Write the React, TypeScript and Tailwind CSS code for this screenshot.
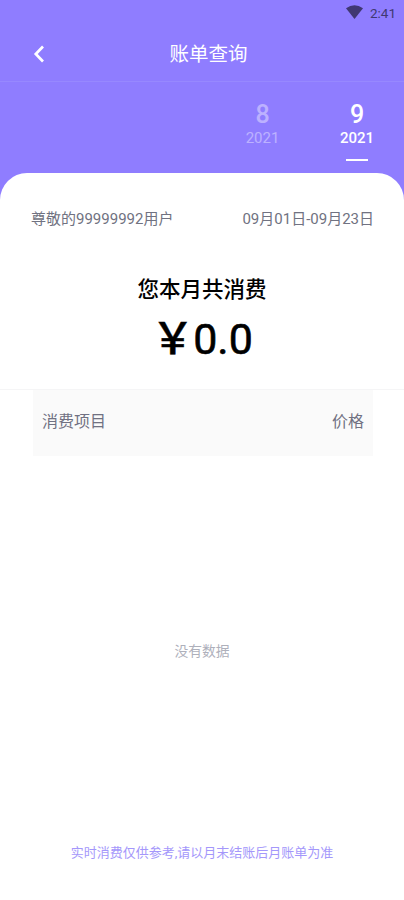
export default function App() {
  return (
    <div className="flex h-[900px] w-[404px] flex-col overflow-hidden bg-[#8f7dff] font-['Roboto','Noto_Sans_CJK_SC',sans-serif]">
      <header className="h-[82px] shrink-0 border-b border-[#9788ff]">
        <div className="flex h-[26px] items-center justify-end gap-[7px] pr-[8px] text-[13.5px] text-[#403872]">
          <svg className="mb-[2px] h-[14px] w-[17px]" viewBox="0 0 17 14" fill="currentColor"><path d="M0 3.3Q8.5-2.6 17 3.3L8.5 14Z" /></svg>
          <span>2:41</span>
        </div>
        <div className="grid h-[56px] grid-cols-[45px_1fr_32px] items-center text-white">
          <svg className="ml-[33px] h-[18px] w-[12px]" viewBox="0 0 12 18" fill="none" stroke="currentColor" strokeWidth="2.7"><path d="M10 1.5L2.8 9L10 16.5" /></svg>
          <h1 className="pt-px text-center text-[19.5px]">账单查询</h1>
        </div>
      </header>
      <nav className="flex h-[91px] shrink-0 justify-end text-center text-white">
        <div className="w-[95px] pt-[19px] opacity-40">
          <div className="text-[25px] leading-[27px] font-medium">8</div>
          <div className="text-[15px] leading-[20px] font-normal">2021</div>
        </div>
        <div className="flex w-[94px] flex-col items-center pt-[19px]">
          <div className="text-[25px] leading-[27px] font-medium">9</div>
          <div className="text-[15px] leading-[20px] font-medium">2021</div>
          <div className="mt-[11px] h-[2px] w-[22px] bg-white" />
        </div>
      </nav>
      <main className="flex flex-1 flex-col rounded-t-[27px] bg-white">
        <section className="h-[217px] shrink-0 border-b border-[#f5f5f6]">
          <div className="flex justify-between px-[31px] pt-[35px] text-[15px] leading-[22px] text-[#707281]">
            <span>尊敬的99999992用户</span>
            <span className="-mr-px">09月01日-09月23日</span>
          </div>
          <h2 className="pt-[44px] text-center text-[21.5px] leading-[32px] font-medium">您本月共消费</h2>
          <div className="flex justify-center text-[43px] leading-[66px]">
            <span className="font-medium [-webkit-text-stroke:0.5px_black]">￥</span><span className="-ml-[1px] [-webkit-text-stroke:0.6px_black]">0.0</span>
          </div>
        </section>
        <section className="mr-[31px] ml-[33px] flex h-[66px] shrink-0 items-center justify-between bg-[#fafafa] px-[9px] pb-[3px] text-[16px] text-[#707182]">
          <span>消费项目</span><span>价格</span>
        </section>
        <p className="pt-[184px] text-center text-[13.8px] leading-[22px] text-[#aeb0bb]">没有数据</p>
        <p className="pt-[180px] text-center text-[13px] leading-[22px] text-[#a497fb]">实时消费仅供参考,请以月末结账后月账单为准</p>
      </main>
    </div>
  );
}
